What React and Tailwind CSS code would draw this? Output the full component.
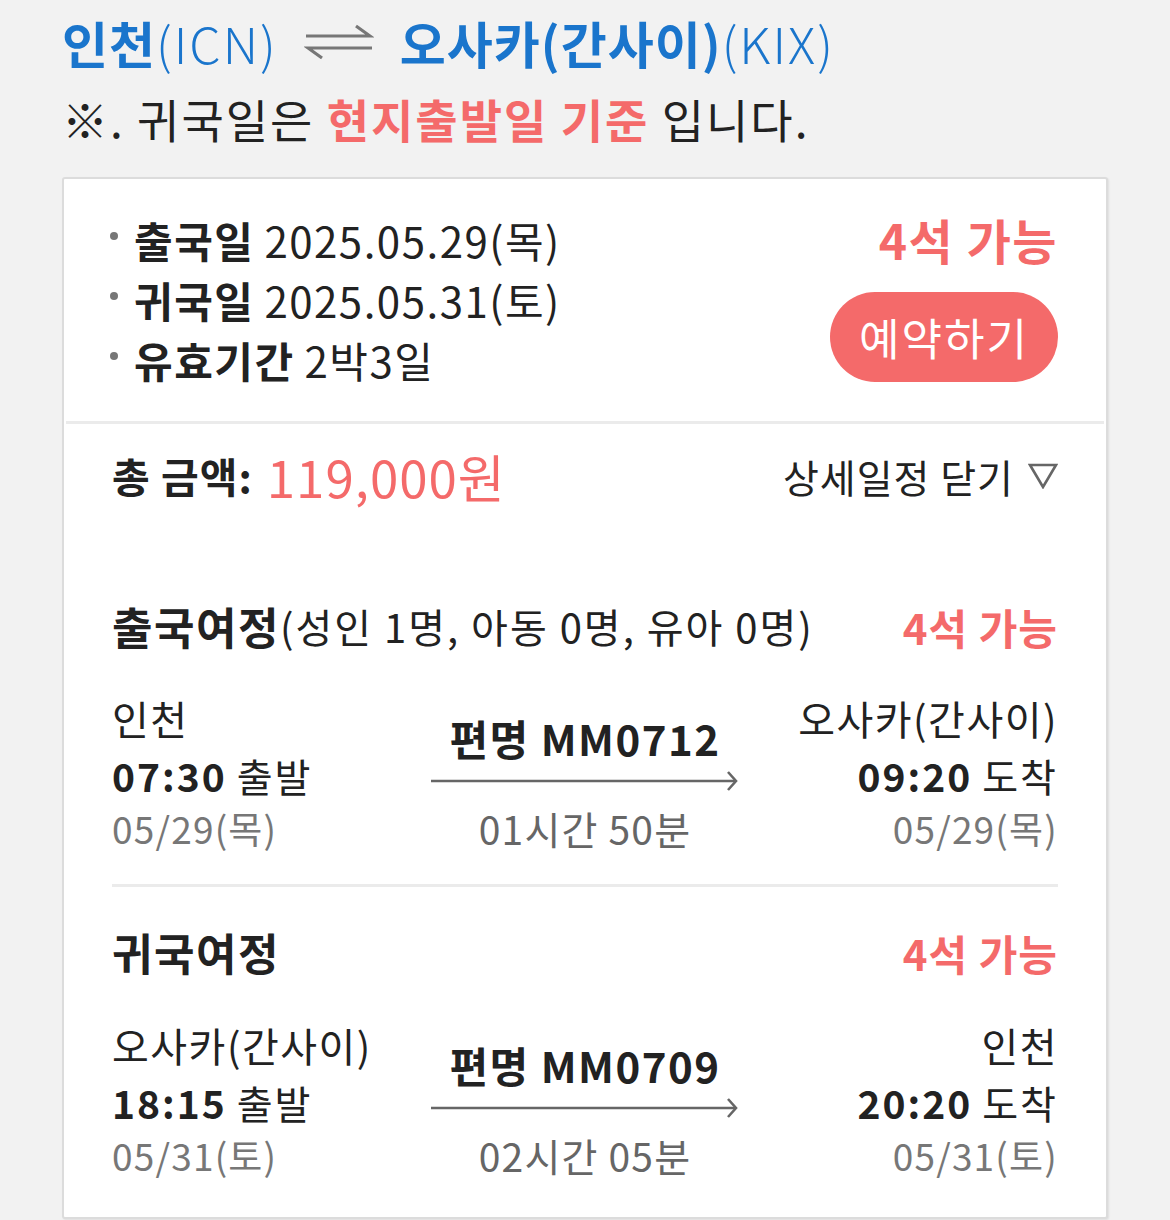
import React from "react";

const RED = "text-[#f46a6a]";

function Harpoons() {
  return (
    <svg width="70" height="36" viewBox="0 0 70 36" fill="none" stroke="#777" strokeWidth="3.2" strokeLinecap="butt">
      <path d="M2 12 H66 L52 2" />
      <path d="M68 24 H4 L18 34" />
    </svg>
  );
}

function Arrow() {
  return (
    <svg width="308" height="24" viewBox="0 0 308 24" fill="none" stroke="#666" strokeWidth="2.6">
      <path d="M0 12 H304" />
      <path d="M297 3 L305 12 L297 21" />
    </svg>
  );
}

function FlightRow({ from, depTime, depDate, flight, duration, to, arrTime, arrDate }) {
  return (
    <div className="grid grid-cols-[1fr_306px_1fr]">
      <div className="flex flex-col">
        <div className="h-[56px] flex items-center text-[40px] leading-[1.2] tracking-[1.5px] text-[#222] whitespace-nowrap">{from}</div>
        <div className="h-[58px] flex items-center text-[39px] leading-[1.2] tracking-[2px] text-[#222]">
          <span className="font-bold">{depTime}</span>
          <span className="ml-[10px]">출발</span>
        </div>
        <div className="mt-[2px] h-[44px] flex items-center text-[37px] leading-[1.1] tracking-[1.2px] text-[#777]">{depDate}</div>
      </div>
      <div className="flex flex-col items-center">
        <div className="h-[42px] mt-[27px] flex items-center text-[42px] leading-[1.1] tracking-[1.5px] font-bold text-[#222] whitespace-nowrap">편명 MM{flight}</div>
        <div className="h-[24px] mt-[10px] flex items-center"><Arrow /></div>
        <div className="h-[40px] mt-[15px] flex items-center text-[39px] leading-[1.1] tracking-[1.2px] text-[#666] whitespace-nowrap">{duration}</div>
      </div>
      <div className="flex flex-col items-end">
        <div className="h-[56px] flex items-center text-[40px] leading-[1.2] tracking-[1.5px] text-[#222] whitespace-nowrap">{to}</div>
        <div className="h-[58px] flex items-center text-[39px] leading-[1.2] tracking-[2px] text-[#222]">
          <span className="font-bold">{arrTime}</span>
          <span className="ml-[10px]">도착</span>
        </div>
        <div className="mt-[2px] h-[44px] flex items-center text-[37px] leading-[1.1] tracking-[1.2px] text-[#777]">{arrDate}</div>
      </div>
    </div>
  );
}

export default function App() {
  return (
    <div
      className="w-[1170px] h-[1220px] bg-[#f2f2f2] overflow-hidden"
      style={{ fontFamily: '"Noto Sans CJK KR", "Noto Sans", sans-serif' }}
    >
      <div className="pl-[62px] pt-[10px]">
        <div className="h-[64px] flex items-center text-[50px] tracking-[1px] text-[#1a75cc] whitespace-nowrap">
          <span className="font-bold">인천</span>
          <span className="font-light tracking-[2px]">(ICN)</span>
          <span className="ml-[26px] mr-[26px] flex items-center"><Harpoons /></span>
          <span className="font-bold">오사카(간사이)</span>
          <span className="font-light tracking-[2px]">(KIX)</span>
        </div>
        <div className="h-[64px] mt-[12px] flex items-center text-[46px] tracking-[2px] text-[#222] whitespace-nowrap">
          <span>※. 귀국일은&nbsp;</span>
          <span className={`font-bold ${RED}`}>현지출발일 기준</span>
          <span>&nbsp;입니다.</span>
        </div>
      </div>

      <div className="ml-[62px] mt-[27px] w-[1046px] bg-white border-2 border-[#dcdcdc] rounded-[3px] shadow-[1px_1px_2px_rgba(0,0,0,0.08)]">
        <div className="flex justify-between pl-[46px] pr-[48px] pt-[31px] pb-[31px]">
          <div className="flex flex-col">
            {[
              ["출국일", "2025.05.29(목)"],
              ["귀국일", "2025.05.31(토)"],
              ["유효기간", "2박3일"],
            ].map(([k, v]) => (
              <div key={k} className="h-[60px] flex items-center text-[42px] leading-[1.2] tracking-[1.5px] text-[#222] whitespace-nowrap">
                <span className="w-[8px] h-[8px] rounded-full bg-[#777] mr-[16px] -translate-y-[4px]" />
                <span className="font-bold">{k}</span>
                <span className="ml-[10px]">{v}</span>
              </div>
            ))}
          </div>
          <div className="flex flex-col items-end">
            <div className={`h-[60px] flex items-center text-[48px] leading-[1.2] tracking-[1.5px] font-bold ${RED} whitespace-nowrap`}>4석 가능</div>
            <div className="mt-[22px] w-[228px] h-[90px] rounded-full bg-[#f46a6a] flex items-center justify-center text-white text-[44px] tracking-[2px]">
              예약하기
            </div>
          </div>
        </div>

        <div className="mx-[2px] h-[3px] bg-[#ebebeb]" />

        <div className="px-[48px] pt-[22px] pb-[40px]">
          <div className="h-[60px] flex items-center justify-between whitespace-nowrap">
            <div className="flex items-center">
              <span className="text-[41px] tracking-[1px] font-bold text-[#222]">총 금액:</span>
              <span className={`ml-[14px] text-[51px] tracking-[1px] ${RED}`}>119,000원</span>
            </div>
            <div className="flex items-center text-[39px] tracking-[1px] text-[#222]">
              <span>상세일정 닫기</span>
              <svg className="ml-[14px]" width="30" height="26" viewBox="0 0 30 26" fill="none" stroke="#666" strokeWidth="2.6">
                <path d="M2 2 H28 L15 24 Z" strokeLinejoin="miter" />
              </svg>
            </div>
          </div>

          <div className="mt-[90px] h-[60px] flex items-center justify-between whitespace-nowrap">
            <div className="flex items-center text-[#222]">
              <span className="text-[44px] tracking-[1.5px] font-bold">출국여정</span>
              <span className="text-[40px] tracking-[2px]">(성인 1명, 아동 0명, 유아 0명)</span>
            </div>
            <span className={`text-[42px] tracking-[1px] font-bold ${RED}`}>4석 가능</span>
          </div>

          <div className="mt-[34px]">
            <FlightRow
              from="인천"
              depTime="07:30"
              depDate="05/29(목)"
              flight="0712"
              duration="01시간 50분"
              to="오사카(간사이)"
              arrTime="09:20"
              arrDate="05/29(목)"
            />
          </div>

          <div className="mt-[34px] h-[3px] bg-[#ebebeb]" />

          <div className="mt-[35px] h-[60px] flex items-center justify-between whitespace-nowrap">
            <span className="text-[44px] tracking-[1.5px] font-bold text-[#222]">귀국여정</span>
            <span className={`text-[42px] tracking-[1px] font-bold ${RED}`}>4석 가능</span>
          </div>

          <div className="mt-[35px]">
            <FlightRow
              from="오사카(간사이)"
              depTime="18:15"
              depDate="05/31(토)"
              flight="0709"
              duration="02시간 05분"
              to="인천"
              arrTime="20:20"
              arrDate="05/31(토)"
            />
          </div>
        </div>
      </div>
    </div>
  );
}
